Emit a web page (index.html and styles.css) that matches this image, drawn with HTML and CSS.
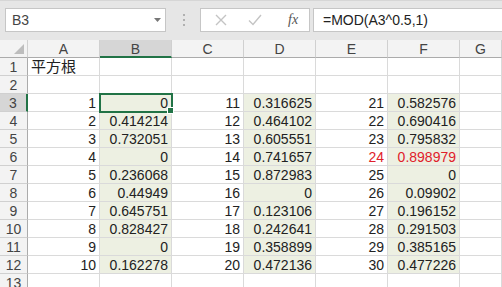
FILE: index.html
```html
<!DOCTYPE html>
<html lang="ja">
<head>
    <meta charset="UTF-8">
    <title>平方根</title>
    <link rel="stylesheet" href="styles.css">
</head>
<body>
    <div class="toolbar">
        <div class="namebox">
            <span>B3</span>
            <svg class="caret" width="7" height="4" viewBox="0 0 7 4"><path d="M0 0h7L3.5 4z" fill="#777"/></svg>
        </div>
        <div class="grip"><i></i><i></i><i></i></div>
        <div class="fxbtns">
            <svg width="12" height="12" viewBox="0 0 12 12"><path d="M1 1l10 10M11 1L1 11" stroke="#c4c4c4" stroke-width="1.4"/></svg>
            <svg width="14" height="12" viewBox="0 0 14 12"><path d="M1 6.5l4 4L13 1" stroke="#c4c4c4" stroke-width="1.4" fill="none"/></svg>
            <span class="fx">fx</span>
        </div>
        <div class="formula">=MOD(A3^0.5,1)</div>
    </div>

    <div class="sheet">
        <div class="hd corner"><svg width="10" height="10" viewBox="0 0 10 10"><path d="M10 0v10H0z" fill="#bdbdbd"/></svg></div>
        <div class="hd">A</div><div class="hd sel">B</div><div class="hd">C</div><div class="hd">D</div><div class="hd">E</div><div class="hd">F</div><div class="hd last">G</div>

        <div class="rh">1</div><div class="c jp">平方根</div><div class="c"></div><div class="c"></div><div class="c"></div><div class="c"></div><div class="c"></div><div class="c"></div>
        <div class="rh">2</div><div class="c"></div><div class="c"></div><div class="c"></div><div class="c"></div><div class="c"></div><div class="c"></div><div class="c"></div>

        <div class="rh sel">3</div><div class="c">1</div><div class="c g active">0</div><div class="c">11</div><div class="c g">0.316625</div><div class="c">21</div><div class="c g">0.582576</div><div class="c"></div>
        <div class="rh">4</div><div class="c">2</div><div class="c g">0.414214</div><div class="c">12</div><div class="c g">0.464102</div><div class="c">22</div><div class="c g">0.690416</div><div class="c"></div>
        <div class="rh">5</div><div class="c">3</div><div class="c g">0.732051</div><div class="c">13</div><div class="c g">0.605551</div><div class="c">23</div><div class="c g">0.795832</div><div class="c"></div>
        <div class="rh">6</div><div class="c">4</div><div class="c g">0</div><div class="c">14</div><div class="c g">0.741657</div><div class="c red">24</div><div class="c g red">0.898979</div><div class="c"></div>
        <div class="rh">7</div><div class="c">5</div><div class="c g">0.236068</div><div class="c">15</div><div class="c g">0.872983</div><div class="c">25</div><div class="c g">0</div><div class="c"></div>
        <div class="rh">8</div><div class="c">6</div><div class="c g">0.44949</div><div class="c">16</div><div class="c g">0</div><div class="c">26</div><div class="c g">0.09902</div><div class="c"></div>
        <div class="rh">9</div><div class="c">7</div><div class="c g">0.645751</div><div class="c">17</div><div class="c g">0.123106</div><div class="c">27</div><div class="c g">0.196152</div><div class="c"></div>
        <div class="rh">10</div><div class="c">8</div><div class="c g">0.828427</div><div class="c">18</div><div class="c g">0.242641</div><div class="c">28</div><div class="c g">0.291503</div><div class="c"></div>
        <div class="rh">11</div><div class="c">9</div><div class="c g">0</div><div class="c">19</div><div class="c g">0.358899</div><div class="c">29</div><div class="c g">0.385165</div><div class="c"></div>
        <div class="rh">12</div><div class="c">10</div><div class="c g">0.162278</div><div class="c">20</div><div class="c g">0.472136</div><div class="c">30</div><div class="c g">0.477226</div><div class="c"></div>
        <div class="rh">13</div><div class="c"></div><div class="c"></div><div class="c"></div><div class="c"></div><div class="c"></div><div class="c"></div><div class="c"></div>
    </div>
</body>
</html>
```

FILE: styles.css
```css
body {
    margin: 0;
    background-color: #ffffff;
    font-family: "Liberation Sans", "Noto Sans CJK JP", sans-serif;
    color: #222;
    overflow: hidden;
}
.toolbar {
    display: flex;
    align-items: center;
    height: 40px;
    padding: 0 0 2px 5px;
    box-sizing: border-box;
    background-color: #e6e6e6;
    border-top: 1px solid #d6d6d6;
}
.namebox {
    display: flex;
    align-items: center;
    justify-content: space-between;
    width: 161px;
    height: 24px;
    padding: 0 4px 0 6px;
    box-sizing: border-box;
    background-color: #fff;
    border: 1px solid #c6c6c6;
    font-size: 14px;
    color: #444;
}
.grip {
    display: flex;
    flex-direction: column;
    gap: 3px;
    margin: 0 15px 0 17px;
}
.grip i {
    display: block;
    width: 2px;
    height: 2px;
    background-color: #b0b0b0;
}
.fxbtns {
    display: flex;
    align-items: center;
    gap: 0;
    width: 110px;
    height: 24px;
    box-sizing: border-box;
    background-color: #fff;
    border: 1px solid #c6c6c6;
    padding-left: 14px;
}
.fxbtns svg {
    margin-right: 21px;
}
.fx {
    font-family: "Liberation Serif", serif;
    font-style: italic;
    font-size: 14px;
    color: #555;
    margin-left: 5px;
}
.formula {
    flex: 1;
    height: 24px;
    margin-left: 3px;
    padding-left: 9px;
    box-sizing: border-box;
    background-color: #fff;
    border: 1px solid #c6c6c6;
    border-right: none;
    font-size: 14px;
    line-height: 22px;
    color: #222;
}
.sheet {
    display: grid;
    grid-template-columns: 28px repeat(6, 72px) 1fr;
    grid-auto-rows: 18px;
}
.sheet > div {
    box-sizing: border-box;
    border-right: 1px solid #dadada;
    border-bottom: 1px solid #dadada;
    font-size: 14px;
    line-height: 18px;
    white-space: nowrap;
    overflow: visible;
}
.hd {
    background-color: #f3f3f3;
    text-align: center;
    color: #444;
    border-right-color: #d0d0d0 !important;
    border-bottom-color: #ababab !important;
}
.hd.corner {
    display: flex;
    align-items: flex-end;
    justify-content: flex-end;
    padding: 0 3px 3px 0;
}
.hd.sel {
    background-color: #d6d6d6;
    border-bottom: 2px solid #217346 !important;
}
.rh {
    background-color: #f3f3f3;
    text-align: center;
    color: #444;
    border-right-color: #ababab !important;
    border-bottom-color: #d0d0d0 !important;
}
.rh.sel {
    background-color: #d6d6d6;
    border-right: 2px solid #217346 !important;
}
.c {
    text-align: right;
    padding-right: 3px;
    color: #222;
}
.c.jp {
    text-align: left;
    padding-left: 3px;
    font-size: 15px;
}
.c.g {
    background-color: #edf0e2;
}
.c.red {
    color: #e0202a;
}
.c.active {
    position: relative;
    outline: 2px solid #217346;
    outline-offset: -1px;
    z-index: 1;
}
.c.active::after {
    content: "";
    position: absolute;
    right: -3px;
    bottom: -3px;
    width: 5px;
    height: 5px;
    background-color: #217346;
    border: 1px solid #fff;
}
```
